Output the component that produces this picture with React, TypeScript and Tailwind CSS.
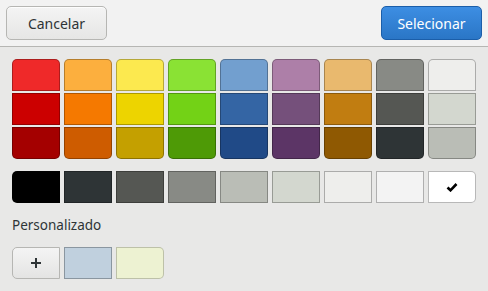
import React from "react";

const rows = [
  ["#ef2929", "#fcaf3e", "#fce94f", "#8ae234", "#729fcf", "#ad7fa8", "#e9b96e", "#888a85", "#eeeeec"],
  ["#cc0000", "#f57900", "#edd400", "#73d216", "#3465a4", "#75507b", "#c17d11", "#555753", "#d3d7cf"],
  ["#a40000", "#ce5c00", "#c4a000", "#4e9a06", "#204a87", "#5c3566", "#8f5902", "#2e3436", "#babdb6"],
];
const grays = ["#000000", "#2e3436", "#555753", "#888a85", "#babdb6", "#d3d7cf", "#eeeeec", "#f3f3f3", "#ffffff"];

export default function App() {
  return (
    <div
      className="w-[488px] h-[291px] bg-[#e8e8e7] overflow-hidden text-[#2e3436]"
      style={{ fontFamily: '"Noto Sans", "DejaVu Sans", sans-serif' }}
    >
      <div className="h-[47px] bg-[#f2f2f2] border-b border-[#b6b6b3] flex items-start justify-between px-[6px] pt-[6px]">
        <button className="w-[101px] h-[34px] rounded-[5px] border border-[#b6b6b3] bg-gradient-to-b from-[#f4f4f4] to-[#e6e6e5] text-[14px] text-[#2e3436] shadow-[0_1px_0_rgba(255,255,255,0.8)_inset]">
          Cancelar
        </button>
        <button className="w-[101px] h-[34px] rounded-[5px] border border-[#1b5ea9] bg-gradient-to-b from-[#3d8ee3] to-[#2a76c6] text-[14px] text-white">
          Selecionar
        </button>
      </div>
      <div className="pl-[12px] pt-[12px]">
        <div className="flex gap-[4px]">
          {rows[0].map((_, c) => (
            <div key={c} className="flex flex-col gap-[2px] w-[48px]">
              {rows.map((r, i) => (
                <div
                  key={i}
                  className={
                    "h-[32px] border border-[rgba(0,0,0,0.28)] " +
                    (i === 0 ? "rounded-t-[5px]" : i === 2 ? "rounded-b-[5px]" : "")
                  }
                  style={{ backgroundColor: r[c] }}
                />
              ))}
            </div>
          ))}
        </div>
        <div className="flex gap-[4px] mt-[12px]">
          {grays.map((g, i) => (
            <div
              key={i}
              className={
                "w-[48px] h-[32px] border border-[rgba(0,0,0,0.28)] flex items-center justify-center " +
                (i === 0 ? "rounded-l-[5px]" : i === 8 ? "rounded-r-[5px]" : "")
              }
              style={{ backgroundColor: g }}
            >
              {i === 8 && (
                <svg width="12" height="10" viewBox="0 0 12 10">
                  <path d="M1.5 5.5 L4.5 8.3 L10.5 2" stroke="#000" strokeWidth="2.6" fill="none" strokeLinejoin="miter" />
                </svg>
              )}
            </div>
          ))}
        </div>
        <div className="mt-[13px] h-[18px] text-[13.5px] leading-[18px] text-[#2e3436]">Personalizado</div>
        <div className="flex gap-[4px] mt-[13px]">
          <div className="w-[48px] h-[32px] rounded-l-[5px] border border-[#b6b6b3] bg-gradient-to-b from-[#f4f4f4] to-[#e4e4e3] flex items-center justify-center">
            <svg width="12" height="12" viewBox="0 0 12 12">
              <path d="M6 1 V11 M1 6 H11" stroke="#2e3436" strokeWidth="2" />
            </svg>
          </div>
          <div className="w-[48px] h-[32px] border border-[rgba(0,0,0,0.28)] bg-[#c0d0de]" />
          <div className="w-[48px] h-[32px] rounded-r-[5px] border border-[rgba(0,0,0,0.2)] bg-[#edf2d2]" />
        </div>
      </div>
    </div>
  );
}
